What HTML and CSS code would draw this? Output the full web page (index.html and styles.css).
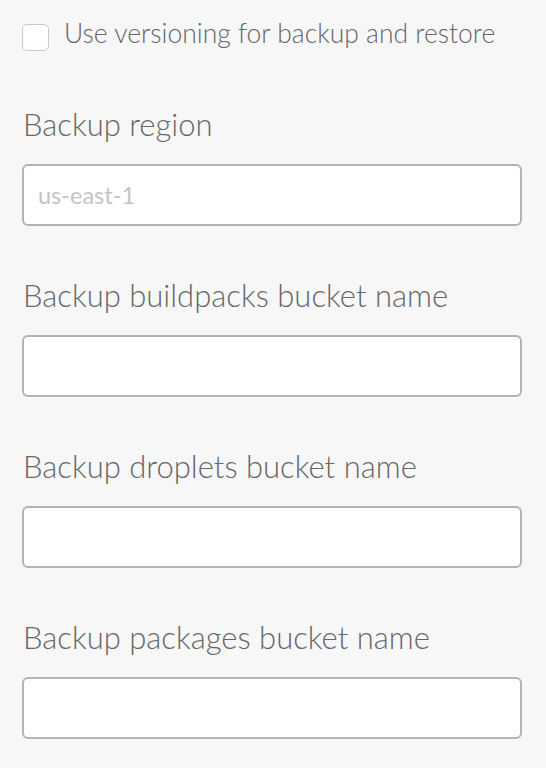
FILE: index.html
```html
<!DOCTYPE html>
<html lang="en">
<head>
<meta charset="utf-8">
<title>Backup settings</title>
<link rel="stylesheet" href="styles.css">
</head>
<body>
<form class="form">
  <label class="check-row">
    <input type="checkbox" class="check">
    <span class="check-text">Use versioning for backup and restore</span>
  </label>

  <div class="field">
    <label class="field-label" for="region">Backup region</label>
    <input id="region" class="text-input" type="text" placeholder="us-east-1">
  </div>

  <div class="field">
    <label class="field-label" for="buildpacks">Backup buildpacks bucket name</label>
    <input id="buildpacks" class="text-input" type="text">
  </div>

  <div class="field">
    <label class="field-label" for="droplets">Backup droplets bucket name</label>
    <input id="droplets" class="text-input" type="text">
  </div>

  <div class="field">
    <label class="field-label" for="packages">Backup packages bucket name</label>
    <input id="packages" class="text-input" type="text">
  </div>
</form>
</body>
</html>
```

FILE: styles.css
```css
html, body {
  margin: 0;
  padding: 0;
  background: #f7f7f7;
}

body {
  font-family: Lato, "Open Sans", sans-serif;
  color: #666666;
}

.form {
  padding: 24px 24px 0 22px;
  display: flex;
  flex-direction: column;
}

.check-row {
  display: flex;
  align-items: flex-start;
  gap: 15px;
  height: 27px;
  margin-bottom: 55px;
}

.check {
  appearance: none;
  -webkit-appearance: none;
  flex: none;
  margin: 0;
  width: 27px;
  height: 27px;
  background: #ffffff;
  border: 1px solid #c9c9c9;
  border-radius: 5px;
  box-sizing: border-box;
}

.check-text {
  font-size: 26.5px;
  line-height: 27px;
  font-weight: 300;
  margin-top: -4px;
  white-space: nowrap;
}

.field {
  display: flex;
  flex-direction: column;
  margin-bottom: 51px;
}

.field-label {
  font-size: 31px;
  line-height: 36px;
  font-weight: 300;
  padding-left: 1px;
  margin-bottom: 22px;
  white-space: nowrap;
}

.text-input {
  box-sizing: border-box;
  width: 500px;
  height: 62px;
  margin: 0;
  padding: 0 14px;
  background: #ffffff;
  border: 2px solid #b3b3b3;
  border-radius: 6px;
  font-family: inherit;
  font-size: 23.5px;
  color: #555555;
  outline: none;
}

.text-input::placeholder {
  color: #c4c4c4;
}
```
